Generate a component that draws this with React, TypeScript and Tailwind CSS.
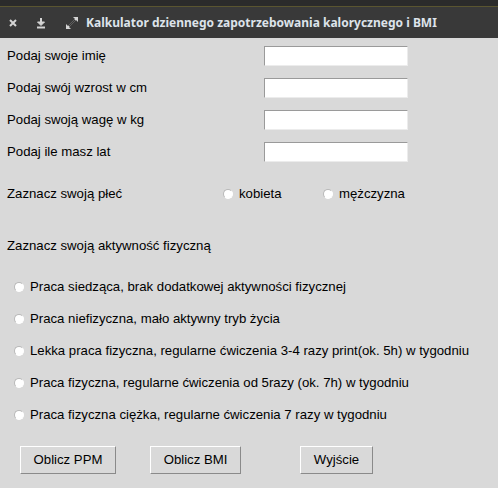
import React from 'react'

const font = { fontFamily: '"Liberation Sans", Arial, sans-serif' }

function Radio() {
  return (
    <span className="inline-block w-[10px] h-[10px] rounded-full bg-white border border-[#b8b8b8] border-b-white border-r-white shrink-0" />
  )
}

function Field({ label }: { label: string }) {
  return (
    <div className="flex items-center h-[32px]">
      <div className="w-[264px] pl-[7px]">{label}</div>
      <div className="w-[144px] h-[20px] bg-white border border-t-[#9a9a9a] border-l-[#9a9a9a] border-b-[#ececec] border-r-[#ececec]" />
    </div>
  )
}

function Btn({ text, w }: { text: string; w: string }) {
  return (
    <div className={`${w} h-[28px] flex items-center justify-center border border-t-white border-l-white border-b-[#8a8a8a] border-r-[#8a8a8a]`}>
      {text}
    </div>
  )
}

const activities = [
  'Praca siedząca, brak dodatkowej aktywności fizycznej',
  'Praca niefizyczna, mało aktywny tryb życia',
  'Lekka praca fizyczna, regularne ćwiczenia 3-4 razy print(ok. 5h) w tygodniu',
  'Praca fizyczna, regularne ćwiczenia od 5razy (ok. 7h) w tygodniu',
  'Praca fizyczna ciężka, regularne ćwiczenia 7 razy w tygodniu',
]

export default function App() {
  return (
    <div className="w-[498px] h-[488px] bg-[#2b2b2b] flex flex-col overflow-hidden">
      {/* title bar */}
      <div className="h-[6px] shrink-0" />
      <div className="h-[1px] bg-[#5a5530] shrink-0" />
      <div
        className="h-[31px] bg-[#393939] flex items-center text-[#dde3ea] shrink-0"
        style={{ fontFamily: '"Noto Sans", "Open Sans", sans-serif' }}
      >
        <svg width="26" height="14" viewBox="0 0 26 14">
          <path d="M10 4 L16 10 M16 4 L10 10" stroke="#d4d4d4" strokeWidth="2" />
        </svg>
        <svg width="32" height="14" viewBox="0 0 32 14">
          <path d="M15 2 V8" stroke="#d4d4d4" strokeWidth="2" />
          <path d="M11.5 6 L15 9.5 L18.5 6 Z" fill="#d4d4d4" stroke="#d4d4d4" strokeWidth="1" />
          <path d="M11 11.5 H19" stroke="#d4d4d4" strokeWidth="2" />
        </svg>
        <svg width="28" height="16" viewBox="0 0 28 16">
          <path d="M9 13 L19 3" stroke="#d4d4d4" strokeWidth="1.6" />
          <path d="M15 2 H20 V7 Z" fill="#d4d4d4" />
          <path d="M8 9 V14 H13 Z" fill="#d4d4d4" />
          <path d="M11 11 L17 5" stroke="#393939" strokeWidth="1.6" />
        </svg>
        <span className="text-[12px] font-bold">
          Kalkulator dziennego zapotrzebowania kalorycznego i BMI
        </span>
      </div>

      {/* content */}
      <div className="flex-1 bg-[#d9d9d9] text-[13.2px] text-black pt-[2px]" style={font}>
        <Field label="Podaj swoje imię" />
        <Field label="Podaj swój wzrost w cm" />
        <Field label="Podaj swoją wagę w kg" />
        <Field label="Podaj ile masz lat" />

        <div className="flex items-center h-[52px]">
          <div className="w-[223px] pl-[7px]">Zaznacz swoją płeć</div>
          <div className="w-[100px] flex items-center gap-[6px]">
            <Radio />
            <span>kobieta</span>
          </div>
          <div className="flex items-center gap-[6px]">
            <Radio />
            <span>mężczyzna</span>
          </div>
        </div>

        <div className="flex items-center h-[51px] pl-[7px]">Zaznacz swoją aktywność fizyczną</div>

        {activities.map((a) => (
          <div key={a} className="flex items-center h-[32px] pl-[14px] gap-[6px]">
            <Radio />
            <span>{a}</span>
          </div>
        ))}

        <div className="flex items-center mt-[15px] pl-[20px]">
          <Btn text="Oblicz PPM" w="w-[96px]" />
          <div className="w-[34px]" />
          <Btn text="Oblicz BMI" w="w-[91px]" />
          <div className="w-[59px]" />
          <Btn text="Wyjście" w="w-[73px]" />
        </div>
      </div>
    </div>
  )
}
